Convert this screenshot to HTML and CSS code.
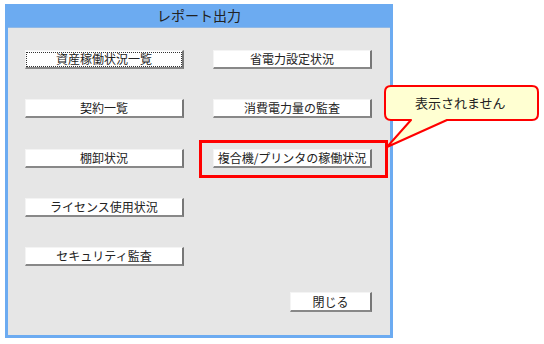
FILE: index.html
```html
<!DOCTYPE html>
<html lang="ja">
<head>
    <meta charset="UTF-8">
    <title>レポート出力</title>
    <link rel="stylesheet" href="styles.css">
</head>
<body>
    <div class="window">
        <div class="title">レポート出力</div>
        <div class="content">
            <div class="grid">
                <button class="btn focused"><span>資産稼働状況一覧</span></button>
                <button class="btn">省電力設定状況</button>
                <button class="btn">契約一覧</button>
                <button class="btn">消費電力量の監査</button>
                <button class="btn">棚卸状況</button>
                <button class="btn">複合機/プリンタの稼働状況</button>
                <button class="btn">ライセンス使用状況</button>
                <div></div>
                <button class="btn">セキュリティ監査</button>
                <div></div>
            </div>
            <div class="footer">
                <button class="btn close-btn">閉じる</button>
            </div>
        </div>
    </div>

    <!-- annotation overlay -->
    <div class="highlight"></div>
    <div class="callout">
        <svg width="160" height="66" viewBox="0 0 160 66">
            <path d="M7 1 H148 Q154 1 154 7 V29 Q154 35 148 35 H63 L3 62 L27 35 H7 Q1 35 1 29 V7 Q1 1 7 1 Z"
                  fill="#ffffd2" stroke="#ff0000" stroke-width="2" stroke-linejoin="round"/>
        </svg>
        <span class="callout-text">表示されません</span>
    </div>
</body>
</html>
```

FILE: styles.css
```css
body {
    margin: 0;
    background-color: #fff;
    font-family: "Noto Sans CJK JP", "DejaVu Sans", sans-serif;
    position: relative;
    width: 544px;
    height: 344px;
    overflow: hidden;
}
.window {
    margin: 4px 0 0 5px;
    width: 388px;
    height: 334px;
    background-color: #6cabf1;
    display: flex;
    flex-direction: column;
    box-sizing: border-box;
    padding: 0 3px 3px 3px;
}
.title {
    height: 23px;
    line-height: 22px;
    text-align: center;
    font-size: 14px;
    color: #222;
}
.content {
    flex: 1;
    background-color: #e6e6e6;
    border-top: 1px solid #8fb8e6;
    padding: 22px 0 0 17px;
}
.grid {
    display: grid;
    grid-template-columns: 159px 159px;
    grid-auto-rows: 19px;
    column-gap: 29px;
    row-gap: 30.3px;
}
.btn {
    font-family: inherit;
    font-size: 12px;
    color: #222;
    background-color: #fff;
    border: none;
    border-top: 1px solid #f4f4f4;
    border-left: 1px solid #f4f4f4;
    border-right: 2px solid #777;
    border-bottom: 2px solid #888;
    padding: 0;
    height: 19px;
    line-height: 16px;
    box-sizing: border-box;
    display: flex;
    align-items: center;
    justify-content: center;
}
.focused span {
    display: flex;
    align-items: center;
    justify-content: center;
    width: 154px;
    height: 13px;
    border: 1px dotted #333;
}
.footer {
    display: flex;
    justify-content: flex-end;
    padding-right: 18px;
    margin-top: 26px;
}
.close-btn {
    width: 82px;
    height: 20px;
}
.highlight {
    position: absolute;
    left: 199px;
    top: 140px;
    width: 189px;
    height: 38px;
    border: 3px solid #ff0000;
    box-sizing: border-box;
}
.callout {
    position: absolute;
    left: 384px;
    top: 85px;
    width: 160px;
    height: 66px;
}
.callout svg {
    position: absolute;
    left: 0;
    top: 0;
}
.callout-text {
    position: absolute;
    left: 31px;
    top: 8px;
    font-size: 13px;
    color: #222;
}
```
